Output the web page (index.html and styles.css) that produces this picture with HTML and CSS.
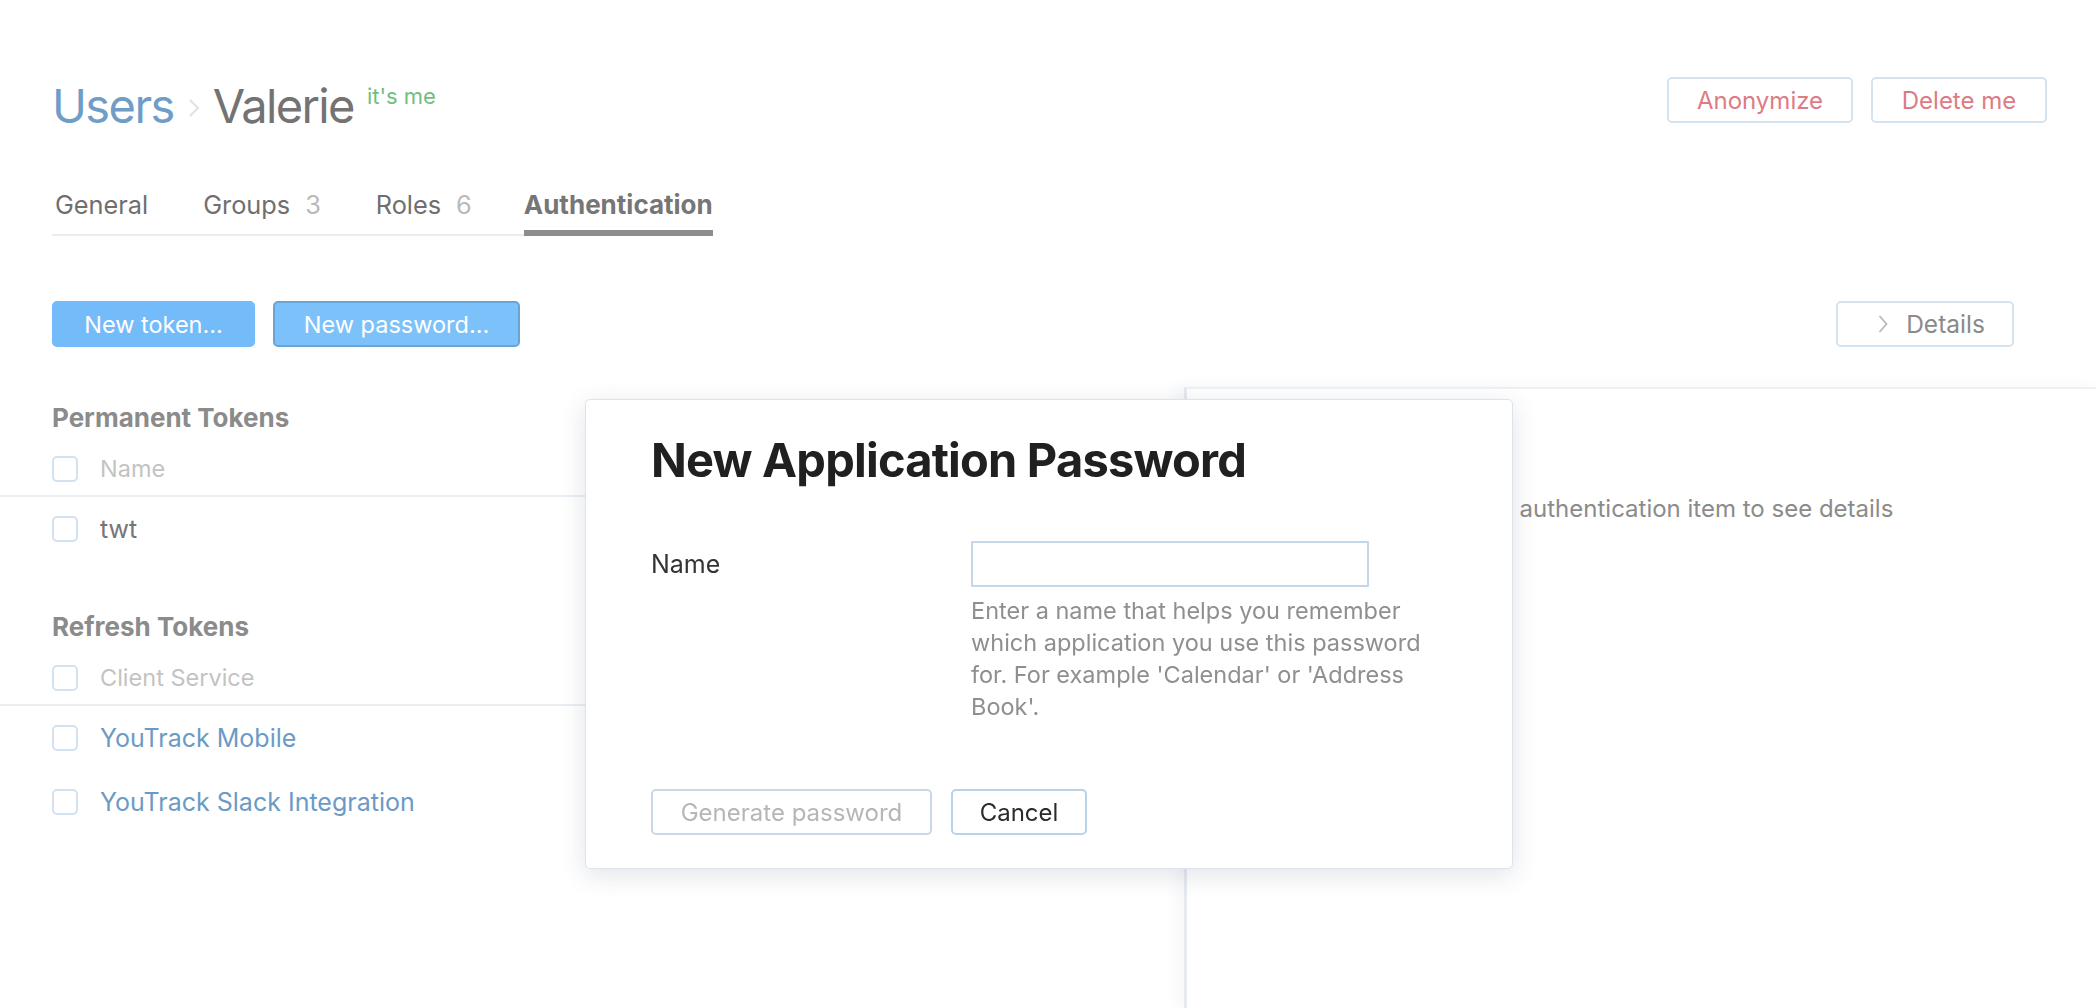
FILE: index.html
```html
<!DOCTYPE html>
<html lang="en">
<head>
<meta charset="utf-8">
<title>Valerie — Authentication</title>
<link rel="stylesheet" href="styles.css">
</head>
<body>
<div class="page">
  <header class="header">
    <div class="crumbs">
      <a class="crumb-link" href="#">Users</a>
      <svg class="crumb-sep" width="12" height="20" viewBox="0 0 12 20"><path d="M2 2 L10 10 L2 18" fill="none" stroke="#e2e2e2" stroke-width="2.2"/></svg>
      <span class="crumb-current">Valerie</span>
      <span class="me-badge">it's me</span>
    </div>
    <div class="header-actions">
      <button class="btn btn-danger">Anonymize</button>
      <button class="btn btn-danger">Delete me</button>
    </div>
  </header>

  <nav class="tabs">
    <span class="tab">General</span>
    <span class="tab">Groups<span class="count">3</span></span>
    <span class="tab">Roles<span class="count">6</span></span>
    <span class="tab tab-active">Authentication</span>
  </nav>

  <div class="toolbar">
    <div class="toolbar-left">
      <button class="btn btn-primary">New token…</button>
      <button class="btn btn-primary btn-pressed">New password…</button>
    </div>
    <button class="btn btn-details">
      <svg width="12" height="20" viewBox="0 0 12 20"><path d="M2.5 2 L9.5 10 L2.5 18" fill="none" stroke="#b9b9b9" stroke-width="1.8"/></svg>
      Details
    </button>
  </div>

  <div class="content">
    <div class="lists">
      <section class="token-section">
        <h2 class="section-title">Permanent Tokens</h2>
        <div class="row row-head"><span class="checkbox"></span><span class="cell-head">Name</span></div>
        <div class="row"><span class="checkbox"></span><span class="cell">twt</span></div>
      </section>
      <section class="token-section token-section-2">
        <h2 class="section-title">Refresh Tokens</h2>
        <div class="row row-head"><span class="checkbox"></span><span class="cell-head">Client Service</span></div>
        <div class="row"><span class="checkbox"></span><a class="cell cell-link" href="#">YouTrack Mobile</a></div>
        <div class="row"><span class="checkbox"></span><a class="cell cell-link" href="#">YouTrack Slack Integration</a></div>
      </section>
    </div>
    <aside class="panel">
      <p class="panel-empty">Select an authentication item to see details</p>
    </aside>
  </div>
</div>

<div class="modal" role="dialog">
  <h1 class="modal-title">New Application Password</h1>
  <div class="form-row">
    <label class="form-label" for="app-name">Name</label>
    <div class="form-field">
      <input id="app-name" class="input" type="text">
      <p class="help">Enter a name that helps you remember which application you use this password for. For example 'Calendar' or 'Address Book'.</p>
    </div>
  </div>
  <div class="modal-actions">
    <button class="btn btn-disabled">Generate password</button>
    <button class="btn btn-cancel">Cancel</button>
  </div>
</div>
</body>
</html>
```

FILE: styles.css
```css
* { box-sizing: border-box; }

html, body {
  margin: 0;
  padding: 0;
  background: #ffffff;
  font-family: Inter, "Noto Sans", "Liberation Sans", sans-serif;
  font-size: 24px;
  color: #333333;
  width: 2096px;
  height: 1008px;
  overflow: hidden;
}

.page {
  display: flex;
  flex-direction: column;
  height: 1008px;
}

/* header */
.header {
  display: flex;
  justify-content: space-between;
  align-items: flex-start;
  padding: 77px 49px 0 52px;
}

.crumbs {
  display: flex;
  align-items: baseline;
  margin-top: 1px;
  font-size: 47px;
  line-height: 1.2;
  letter-spacing: -1.6px;
}

.crumb-link {
  color: #6f9dc7;
  text-decoration: none;
}

.crumb-sep {
  align-self: center;
  margin: 4px 13px 0 14px;
}

.crumb-current {
  color: #737373;
}

.me-badge {
  font-size: 22px;
  letter-spacing: 0;
  color: #72be81;
  margin-left: 13px;
  align-self: flex-start;
  margin-top: 5px;
}

.header-actions {
  display: flex;
  gap: 18px;
}

/* buttons */
.btn {
  height: 46px;
  padding: 0 20px;
  border-radius: 5px;
  border: 2px solid #d4e3f0;
  background: #ffffff;
  font-family: inherit;
  font-size: 24px;
  color: #333333;
  display: inline-flex;
  align-items: center;
  justify-content: center;
  white-space: nowrap;
}

.btn-danger {
  color: #dc7c84;
  width: 186px;
}
.btn-danger + .btn-danger { width: 176px; }

.btn-primary {
  background: #74bbfa;
  border-color: #74bbfa;
  color: #ffffff;
  width: 203px;
  font-size: 23.5px;
}

.btn-pressed {
  background: #7dc1fb;
  border-color: #6aa4d6;
  width: 247px;
}

.btn-details {
  width: 178px;
  color: #8a8a8a;
  gap: 17px;
  padding-left: 28px;
  padding-right: 16px;
  margin-right: 82px;
  font-size: 24.5px;
}

.btn-disabled {
  color: #b6b6b6;
  border-color: #c6d9ea;
  width: 281px;
}

.btn-cancel {
  color: #2b2b2b;
  border-color: #b9d2e7;
  width: 136px;
}

/* tabs */
.tabs {
  display: flex;
  gap: 49px;
  align-self: flex-start;
  margin: 55px 0 0 52px;
  border-bottom: 2px solid #e9edf1;
  font-size: 25.3px;
  line-height: 32px;
}

.tab {
  color: #6f6f6f;
  padding: 0 3px 9px 3px;
  margin-bottom: -2px;
  border-bottom: 6px solid transparent;
}

.tab .count {
  color: #bababa;
  margin-left: 15px;
}

.tab-active {
  font-size: 26px;
  font-weight: 700;
  color: #767676;
  border-bottom-color: #8d8d8d;
  padding-left: 0;
  padding-right: 0;
}

/* toolbar */
.toolbar {
  display: flex;
  justify-content: space-between;
  align-items: center;
  margin-top: 65px;
  padding-left: 52px;
}

.toolbar-left {
  display: flex;
  gap: 18px;
}

/* content */
.content {
  display: flex;
  flex: 1;
  margin-top: 40px;
}

.lists {
  width: 1184px;
  padding-top: 15px;
}

.token-section-2 {
  margin-top: 50px;
}

.section-title {
  margin: 0;
  padding-left: 52px;
  font-size: 26px;
  line-height: 32px;
  font-weight: 700;
  color: #8b8b8b;
}

.row {
  display: flex;
  align-items: center;
  height: 64px;
  padding-left: 52px;
}

.row-head {
  height: 53px;
  margin-top: 10px;
  border-bottom: 2px solid #e9eef3;
  padding-bottom: 2px;
}

.checkbox {
  width: 26px;
  height: 26px;
  border: 2px solid #d2e2f0;
  border-radius: 5px;
  background: #ffffff;
  flex: none;
}

.cell, .cell-head {
  margin-left: 22px;
}

.cell-head { color: #c3c3c3; font-size: 23.5px; }
.cell { color: #767676; text-decoration: none; font-size: 25px; }
.cell-link { color: #6b9ac6; }

.panel {
  flex: 1;
  border-left: 3px solid #e6eaef;
  border-top: 2px solid #eef1f4;
  box-shadow: -6px 0 14px rgba(60, 80, 110, 0.05);
  padding-top: 104px;
}

.panel-empty {
  margin: 0;
  text-align: center;
  line-height: 32px;
  color: #8b8b8b;
  padding-left: 18px;
}

/* modal */
.modal {
  position: fixed;
  left: 585px;
  top: 399px;
  width: 928px;
  height: 470px;
  background: #ffffff;
  border: 1px solid #dde3ea;
  border-radius: 5px;
  box-shadow: 0 6px 26px rgba(40, 60, 90, 0.14);
  padding: 32px 65px 0 65px;
}

.modal-title {
  margin: 0;
  font-size: 47px;
  line-height: 1.2;
  font-weight: 700;
  letter-spacing: -0.8px;
  color: #202020;
}

.form-row {
  display: grid;
  grid-template-columns: 320px 480px;
  margin-top: 53px;
}

.form-label {
  line-height: 46px;
  color: #333333;
  font-size: 25px;
}

.input {
  display: block;
  width: 398px;
  height: 46px;
  border: 2px solid #c2d7ea;
  border-radius: 1px;
  font-family: inherit;
  font-size: 24px;
  outline: none;
}

.help {
  margin: 8px 0 0 0;
  line-height: 32px;
  color: #8f8f8f;
  width: 480px;
  font-size: 23.5px;
}

.modal-actions {
  display: flex;
  gap: 19px;
  margin-top: 66px;
}
```
